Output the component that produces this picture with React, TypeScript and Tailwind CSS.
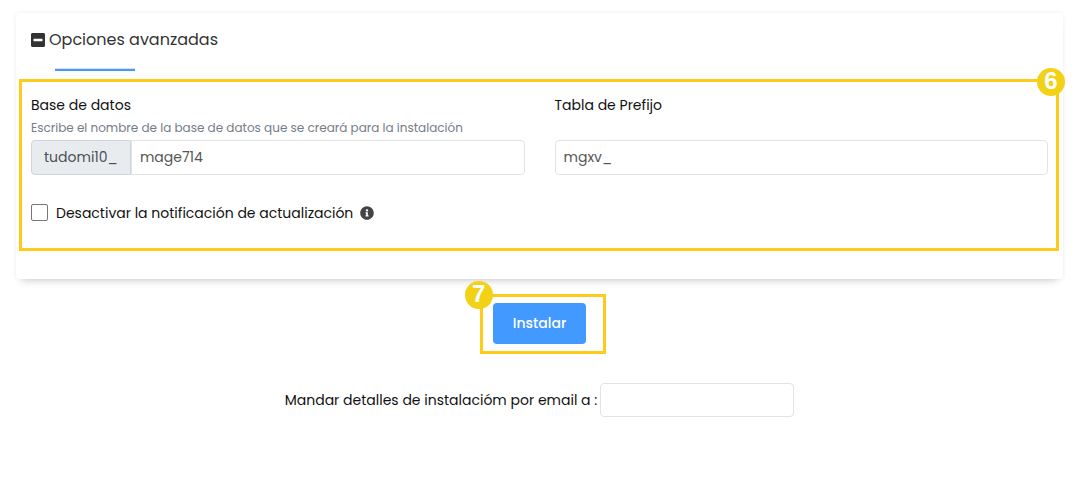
import type { ReactNode } from "react";
import { FaInfoCircle, FaMinusSquare } from "react-icons/fa";

function StepBadge({ className, children }: { className: string; children: ReactNode }) {
  return (
    <span
      className={`absolute flex size-7 items-center justify-center rounded-full bg-[#f2d117] pb-0.5 font-['Liberation_Sans',Arial,sans-serif] text-2xl leading-none font-bold text-white ${className}`}
    >
      {children}
    </span>
  );
}

const field =
  "h-[35px] w-full min-w-0 border border-[#e2e3e5] bg-white px-2 text-sm text-[#555] outline-none focus:border-[#4299ff]";

export default function App() {
  return (
    <main className="bg-white pt-[13px] pr-[19px] pb-10 pl-4 font-[Poppins,Inter,sans-serif] text-sm text-[#111]">
      <section className="rounded bg-white pr-1 pb-7 pl-[3px] shadow-[0_0_5px_rgba(0,0,0,0.07),0_8px_8px_-6px_rgba(0,0,0,0.16)]">
        <header className="flex h-[66px] flex-col px-3 pt-[15px]">
          <h2 className="text-base leading-6 text-[#333]">
            <button type="button" className="flex items-center gap-1">
              <FaMinusSquare className="h-4 w-3.5" aria-hidden="true" />
              Opciones avanzadas
            </button>
          </h2>
          <div className="mt-4 ml-6 h-[3px] w-20 border-t border-[#dfdfdf] bg-[#4299ff]" />
        </header>

        <div className="relative border-[3px] border-[#ffcb1a] pt-3 pr-2 pb-[26px] pl-[9px]">
          <StepBadge className="-top-3.5 -right-[9px]">6</StepBadge>
          <div className="grid grid-cols-2 gap-[30px]">
            <div className="flex flex-col">
              <label htmlFor="db" className="leading-[22px]">Base de datos</label>
              <p className="mt-0.5 text-xs leading-5 text-[#747d86]">
                Escribe el nombre de la base de datos que se creará para la instalación
              </p>
              <div className="mt-0.5 flex">
                <span className="flex items-center rounded-l border border-[#ced4da] bg-[#e9ecef] px-3 pb-0.5 text-[#495057]">
                  tudomi10_
                </span>
                <input id="db" defaultValue="mage714" className={`${field} rounded-r`} />
              </div>
            </div>
            <div className="flex flex-col justify-between">
              <label htmlFor="prefix" className="leading-[22px]">Tabla de Prefijo</label>
              <input id="prefix" defaultValue="mgxv_" className={`${field} rounded`} />
            </div>
          </div>
          <div className="mt-7 flex h-[19px] items-center">
            <input
              id="notify"
              type="checkbox"
              className="size-[17px] appearance-none rounded-xs border border-[#767676] bg-white checked:bg-[#4299ff]"
            />
            <label htmlFor="notify" className="ml-2">Desactivar la notificación de actualización</label>
            <FaInfoCircle className="ml-[7px] size-3.5 text-[#444]" aria-hidden="true" />
          </div>
        </div>
      </section>

      <div className="mt-6 flex justify-center">
        <div className="relative">
          <button type="button" className="h-[41px] rounded bg-[#4299ff] px-5 pb-0.5 font-medium text-white">
            Instalar
          </button>
          <div className="pointer-events-none absolute -top-[9px] -right-5 -bottom-2.5 -left-[13px] border-[3px] border-[#ffcb1a]">
            <StepBadge className="-top-4 -left-[18px]">7</StepBadge>
          </div>
        </div>
      </div>

      <div className="mt-[39px] flex items-center justify-center gap-[3px]">
        <label htmlFor="email">Mandar detalles de instalacióm por email a :</label>
        <input
          id="email"
          type="email"
          className="h-[34px] w-[194px] rounded border border-[#e2e3e5] bg-white px-2 outline-none focus:border-[#4299ff]"
        />
      </div>
    </main>
  );
}
